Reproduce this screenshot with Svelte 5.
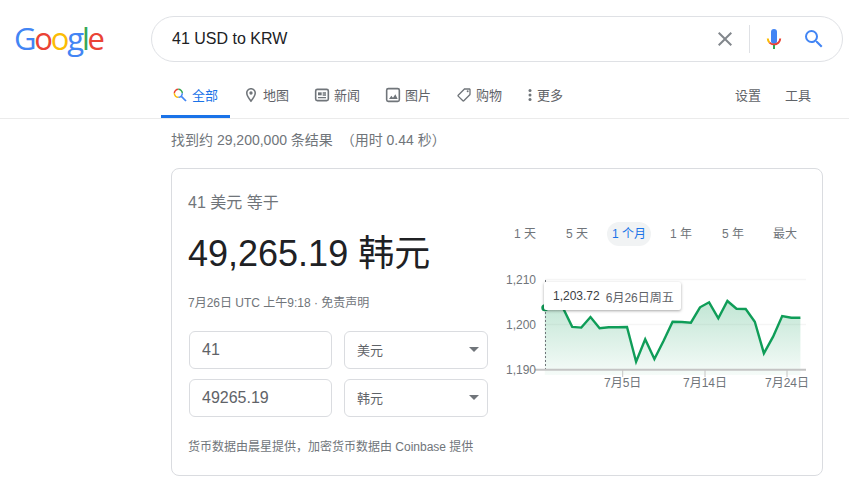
<script lang="ts">
	const tabs = [
		{ label: '全部', icon: 'all', active: true },
		{ label: '地图', icon: 'maps' },
		{ label: '新闻', icon: 'news' },
		{ label: '图片', icon: 'images' },
		{ label: '购物', icon: 'shop' },
		{ label: '更多', icon: 'more' }
	];
	const ranges = ['1 天', '5 天', '1 个月', '1 年', '5 年', '最大'];
	const activeRange = '1 个月';

	const logo = [
		['G', '#4285f4'],
		['o', '#ea4335'],
		['o', '#fbbc05'],
		['g', '#4285f4'],
		['l', '#34a853'],
		['e', '#ea4335']
	];

	// chart box starts at page x=500, y=270
	const trace = [
		37.7, 38.3, 38.3, 56.9, 57.6, 47, 58.3, 57.3, 57.2, 57, 91.7, 69.3, 89, 71, 51.7, 52, 52.7,
		37.3, 32.3, 48.3, 31, 38.7, 39, 51.7, 83.3, 66.7, 46, 47.7, 47.7
	];
	const px = (i: number) => 44.8 + i * 9.13;
	const linePath = trace.map((y, i) => `${i ? 'L' : 'M'}${px(i).toFixed(1)} ${y}`).join(' ');
	const areaPath = `${linePath} L${px(28).toFixed(1)} 105 L${px(0).toFixed(1)} 105 Z`;
	const yLabels = [
		{ text: '1,210', y: 9 },
		{ text: '1,200', y: 54.5 },
		{ text: '1,190', y: 99.5 }
	];
	const xLabels = [
		{ text: '7月5日', x: 122.7 },
		{ text: '7月14日', x: 205 },
		{ text: '7月24日', x: 287 }
	];
</script>

<div class="page">
	<header class="top">
		<div class="logo">
			{#each logo as [letter, color]}
				<span style:color>{letter}</span>
			{/each}
		</div>
		<div class="searchbox">
			<span class="query">41 USD to KRW</span>
			<svg class="clear" viewBox="0 0 24 24" width="24" height="24">
				<path
					fill="#82878c"
					d="M19 6.41L17.59 5 12 10.59 6.41 5 5 6.41 10.59 12 5 17.59 6.41 19 12 13.41 17.59 19 19 17.59 13.41 12z"
				/>
			</svg>
			<span class="divider"></span>
			<svg class="mic" viewBox="0 0 24 24" width="24" height="24">
				<rect x="9" y="2" width="6" height="15" rx="3" fill="#4285f4" />
				<path d="M5.8 11.5c0 1.6.6 3 1.7 4.1" fill="none" stroke="#fbbc05" stroke-width="2" />
				<path
					d="M7.5 15.6c1.1 1.1 2.7 1.8 4.5 1.8 3.4 0 6.2-2.6 6.2-5.9"
					fill="none"
					stroke="#ea4335"
					stroke-width="2"
				/>
				<rect x="11" y="18" width="2" height="4" fill="#34a853" />
			</svg>
			<svg class="go" viewBox="0 0 24 24" width="24" height="24">
				<path
					fill="#4285f4"
					d="M15.5 14h-.79l-.28-.27A6.471 6.471 0 0 0 16 9.5 6.5 6.5 0 1 0 9.5 16c1.61 0 3.09-.59 4.23-1.57l.27.28v.79l5 4.99L20.49 19l-4.99-5zm-6 0C7.01 14 5 11.99 5 9.5S7.01 5 9.5 5 14 7.01 14 9.5 11.99 14 9.5 14z"
				/>
			</svg>
		</div>
	</header>

	<nav class="tabs">
		{#each tabs as tab}
			<div class="tab" class:active={tab.active}>
				{#if tab.icon === 'all'}
					<svg viewBox="0 0 24 24" width="16" height="16">
						<path d="M3.5 9.5A6 6 0 0 1 9.5 3.5" fill="none" stroke="#ea4335" stroke-width="2.2" />
						<path d="M9.5 3.5A6 6 0 0 1 15.5 9.5" fill="none" stroke="#34a853" stroke-width="2.2" />
						<path d="M15.5 9.5A6 6 0 0 1 9.5 15.5" fill="none" stroke="#4285f4" stroke-width="2.2" />
						<path d="M9.5 15.5A6 6 0 0 1 3.5 9.5" fill="none" stroke="#fbbc05" stroke-width="2.2" />
						<path d="M14 14l7 7" stroke="#4285f4" stroke-width="2.6" />
					</svg>
				{:else if tab.icon === 'maps'}
					<svg viewBox="0 0 24 24" width="16" height="16">
						<path
							fill="#70757a"
							d="M12 1.5C7.9 1.5 4.5 4.9 4.5 9c0 5.5 7.5 14 7.5 14s7.5-8.5 7.5-14c0-4.1-3.4-7.5-7.5-7.5zm0 2.3c2.9 0 5.2 2.3 5.2 5.2 0 3-3 7.5-5.2 10.3C9.800 16.5 6.8 12 6.8 9c0-2.9 2.3-5.2 5.2-5.2z"
						/>
						<circle cx="12" cy="9" r="2.5" fill="#70757a" />
					</svg>
				{:else if tab.icon === 'news'}
					<svg viewBox="0 0 24 24" width="16" height="16">
						<rect x="2.5" y="3.5" width="19" height="17" rx="2.5" fill="none" stroke="#70757a" stroke-width="2.4" />
						<rect x="6" y="8" width="5.5" height="4.5" fill="#70757a" />
						<path d="M13 9h5M13 12h5M6 16h12" stroke="#70757a" stroke-width="2" />
					</svg>
				{:else if tab.icon === 'images'}
					<svg viewBox="0 0 24 24" width="16" height="16">
						<rect x="2.5" y="2.5" width="19" height="19" rx="2.5" fill="none" stroke="#70757a" stroke-width="2.4" />
						<path d="M6 18l3.5-5 2.5 3 3.5-5 3.5 7z" fill="#70757a" />
					</svg>
				{:else if tab.icon === 'shop'}
					<svg viewBox="0 0 24 24" width="16" height="16">
						<g transform="matrix(-1 0 0 1 24 0)">
							<path
								fill="#70757a"
								d="M21.41 11.58l-9-9C12.05 2.22 11.55 2 11 2H4c-1.1 0-2 .9-2 2v7c0 .55.22 1.05.59 1.42l9 9c.36.36.86.58 1.41.58s1.05-.22 1.41-.59l7-7c.37-.36.59-.86.59-1.41s-.23-1.06-.59-1.42zM13 20.01L4 11V4h7v-.01l9 9-7 7.02z"
							/>
							<circle cx="6.5" cy="6.5" r="1.5" fill="#70757a" />
						</g>
					</svg>
				{:else}
					<svg class="dots" viewBox="0 0 4 16" width="4" height="16">
						<circle cx="2" cy="3.5" r="1.5" fill="#70757a" />
						<circle cx="2" cy="8" r="1.5" fill="#70757a" />
						<circle cx="2" cy="12.5" r="1.5" fill="#70757a" />
					</svg>
				{/if}
				<span>{tab.label}</span>
			</div>
		{/each}
		<div class="tools">
			<span>设置</span>
			<span>工具</span>
		</div>
	</nav>

	<main class="results">
		<div class="stats">找到约 29,200,000 条结果 &nbsp;（用时 0.44 秒）</div>
		<section class="card">
			<div class="converter">
				<div class="from">41 美元 等于</div>
				<div class="amount">49,265.19 韩元</div>
				<div class="stamp">7月26日 UTC 上午9:18 · 免责声明</div>
				<div class="fields">
					<input class="field" value="41" readonly />
					<div class="select">美元<i class="caret"></i></div>
					<input class="field" value="49265.19" readonly />
					<div class="select">韩元<i class="caret"></i></div>
				</div>
				<div class="source">货币数据由晨星提供，加密货币数据由 Coinbase 提供</div>
			</div>
			<div class="chart-col">
				<div class="ranges">
					{#each ranges as range}
						<span class="range" class:on={range === activeRange}>{range}</span>
					{/each}
				</div>
				<div class="chart">
					<svg viewBox="0 0 312 120" width="312" height="120">
						<defs>
							<linearGradient id="fade" x1="0" y1="0" x2="0" y2="1">
								<stop offset="0" stop-color="#0f9d58" stop-opacity="0.26" />
								<stop offset="1" stop-color="#0f9d58" stop-opacity="0.04" />
							</linearGradient>
						</defs>
						<path d="M45 9.5H306M45 54.5H306" stroke="#f5f5f5" stroke-width="1.5" />
						<path d={areaPath} fill="url(#fade)" />
						<path d="M45.5 10V99" stroke="#70757a" stroke-dasharray="2 2" />
						<path d={linePath} fill="none" stroke="#0f9d58" stroke-width="2.4" />
						<circle cx={px(0)} cy={trace[0]} r="3.5" fill="#0f9d58" />
						<path d="M35 99.7H306" stroke="#c4c4c4" stroke-width="2" />
						{#each xLabels as tick}
							<path d="M{tick.x} 100V107" stroke="#c4c4c4" />
							<text class="axis" x={tick.x} y="117" text-anchor="middle">{tick.text}</text>
						{/each}
						{#each yLabels as tick}
							<text class="axis" x="6" y={tick.y + 4.5}>{tick.text}</text>
						{/each}
					</svg>
					<div class="tooltip"><b>1,203.72</b><span>6月26日周五</span></div>
				</div>
			</div>
		</section>
	</main>
</div>

<style>
	:global(body) {
		margin: 0;
		background: #fff;
		overflow: hidden;
	}
	.page {
		width: 849px;
		height: 488px;
		overflow: hidden;
		font-family: 'Liberation Sans', 'Noto Sans CJK SC', sans-serif;
		color: #70757a;
	}
	.top {
		display: flex;
		align-items: center;
		padding: 16px 6px 0 15px;
		height: 46px;
	}
	.logo {
		width: 136px;
		font-family: 'Open Sans', sans-serif;
		font-size: 31px;
		line-height: 46px;
		letter-spacing: -2.2px;
		font-weight: 500;
		margin-top: -3px;
		text-indent: -1px;
		white-space: nowrap;
	}
	.searchbox {
		flex: 1;
		height: 44px;
		display: flex;
		align-items: center;
		border: 1px solid #dfe1e5;
		border-radius: 23px;
		padding-left: 20px;
		padding-right: 16px;
	}
	.query {
		flex: 1;
		font-size: 16px;
		color: #202124;
	}
	.clear {
		margin-right: 12px;
	}
	.divider {
		width: 1px;
		height: 28px;
		background: #dfe1e5;
		margin-right: 12px;
	}
	.mic {
		margin-right: 16px;
	}
	.tabs {
		display: flex;
		gap: 2px;
		margin-top: 18px;
		padding-left: 161px;
		padding-right: 38px;
		height: 38px;
		border-bottom: 1px solid #ebebeb;
		font-size: 13px;
		color: #5f6368;
		box-sizing: content-box;
	}
	.tab {
		display: flex;
		align-items: center;
		gap: 4.5px;
		padding: 0 12px 6px 11.5px;
		border-bottom: 3px solid transparent;
		height: 29px;
	}
	.tab svg {
		margin-left: -1px;
	}
	.tab .dots {
		margin-left: 0;
		margin-right: 1px;
	}
	.tab.active {
		color: #1a73e8;
		border-bottom-color: #1a73e8;
	}
	.tools {
		margin-left: auto;
		display: flex;
		gap: 24px;
		height: 29px;
		align-items: center;
	}
	.results {
		padding-left: 171px;
		width: 652px;
	}
	.stats {
		font-size: 14px;
		line-height: 20px;
		margin-top: 11px;
	}
	.card {
		margin-top: 18px;
		box-sizing: border-box;
		height: 308px;
		border: 1px solid #dadce0;
		border-radius: 8px;
		display: flex;
		padding: 0 10px 0 16px;
	}
	.converter {
		width: 312px;
	}
	.from {
		font-size: 16px;
		line-height: 20px;
		margin-top: 24px;
	}
	.amount {
		font-size: 36px;
		line-height: 44px;
		color: #202124;
		margin-top: 19px;
	}
	.stamp {
		font-size: 12px;
		line-height: 16px;
		margin-top: 19px;
	}
	.fields {
		display: grid;
		grid-template-columns: 143px 144px;
		grid-auto-rows: 38px;
		gap: 10px 12px;
		margin: 20px 0 0 1px;
	}
	.field {
		box-sizing: border-box;
		width: 100%;
		height: 38px;
		border: 1px solid #dadce0;
		border-radius: 6px;
		padding: 0 12px;
		font: 16px 'Liberation Sans', sans-serif;
		color: #5f6368;
		outline: none;
		background: #fff;
	}
	.select {
		position: relative;
		box-sizing: border-box;
		border: 1px solid #dadce0;
		border-radius: 6px;
		padding: 2px 12px 0;
		font-size: 13px;
		line-height: 34px;
		color: #5f6368;
	}
	.caret {
		position: absolute;
		right: 8px;
		top: 15px;
		border: 5px solid transparent;
		border-top: 5px solid #70757a;
		border-bottom: 0;
	}
	.source {
		font-size: 12px;
		line-height: 16px;
		margin-top: 22px;
	}
	.chart-col {
		width: 312px;
	}
	.ranges {
		display: grid;
		grid-template-columns: repeat(6, 52px);
		margin-top: 53px;
		margin-left: -1px;
		justify-items: center;
	}
	.range {
		font-size: 12px;
		line-height: 24px;
		padding: 0 5px;
		border-radius: 12px;
	}
	.range.on {
		background: #f1f3f4;
		color: #1a73e8;
	}
	.chart {
		position: relative;
		margin-top: 24px;
		height: 120px;
	}
	.chart svg {
		display: block;
	}
	.axis {
		font-size: 12px;
		fill: #70757a;
	}
	.tooltip {
		position: absolute;
		left: 44px;
		top: 12px;
		box-sizing: border-box;
		width: 137px;
		height: 28px;
		padding-left: 9px;
		display: flex;
		gap: 6px;
		align-items: center;
		background: #fff;
		border-radius: 2px;
		box-shadow: 0 1px 3px rgba(0, 0, 0, 0.35);
		font-size: 12px;
		color: #5f6368;
		white-space: nowrap;
	}
	.tooltip b {
		font-weight: 400;
		color: #3c4043;
	}
</style>
